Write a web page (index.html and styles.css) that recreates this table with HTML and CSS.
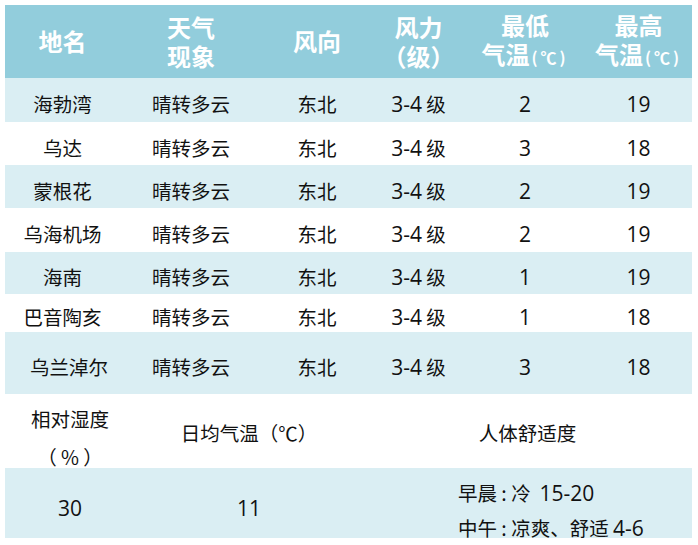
FILE: index.html
```html
<!DOCTYPE html>
<html lang="zh">
<head>
<meta charset="utf-8">
<link rel="stylesheet" href="styles.css">
</head>
<body>
<div class="sheet">
  <div class="row head">
    <div class="hc"><div>地名</div></div>
    <div class="hc"><div>天气<br>现象</div></div>
    <div class="hc"><div>风向</div></div>
    <div class="hc"><div>风力<br>（级）</div></div>
    <div class="hc"><div>最低<br>气温<span class="unit">(℃)</span></div></div>
    <div class="hc"><div>最高<br>气温<span class="unit">(℃)</span></div></div>
  </div>
  <div class="row shade h44"><div class="c">海勃湾</div><div class="c">晴转多云</div><div class="c">东北</div><div class="c"><span class="n">3-4</span>&nbsp;级</div><div class="c"><span class="n">2</span></div><div class="c"><span class="n">19</span></div></div>
  <div class="row h43"><div class="c">乌达</div><div class="c">晴转多云</div><div class="c">东北</div><div class="c"><span class="n">3-4</span>&nbsp;级</div><div class="c"><span class="n">3</span></div><div class="c"><span class="n">18</span></div></div>
  <div class="row shade h43"><div class="c">蒙根花</div><div class="c">晴转多云</div><div class="c">东北</div><div class="c"><span class="n">3-4</span>&nbsp;级</div><div class="c"><span class="n">2</span></div><div class="c"><span class="n">19</span></div></div>
  <div class="row h44"><div class="c">乌海机场</div><div class="c">晴转多云</div><div class="c">东北</div><div class="c"><span class="n">3-4</span>&nbsp;级</div><div class="c"><span class="n">2</span></div><div class="c"><span class="n">19</span></div></div>
  <div class="row shade h42"><div class="c">海南</div><div class="c">晴转多云</div><div class="c">东北</div><div class="c"><span class="n">3-4</span>&nbsp;级</div><div class="c"><span class="n">1</span></div><div class="c"><span class="n">19</span></div></div>
  <div class="row h38"><div class="c">巴音陶亥</div><div class="c">晴转多云</div><div class="c">东北</div><div class="c"><span class="n">3-4</span>&nbsp;级</div><div class="c"><span class="n">1</span></div><div class="c"><span class="n">18</span></div></div>
  <div class="row shade h62"><div class="c shift">乌兰淖尔</div><div class="c">晴转多云</div><div class="c">东北</div><div class="c"><span class="n">3-4</span>&nbsp;级</div><div class="c"><span class="n">3</span></div><div class="c"><span class="n">18</span></div></div>

  <div class="brow h74">
    <div class="bc two"><div>相对湿度<br>（ % ）</div></div>
    <div class="bc label"><div>日均气温（℃）</div></div>
    <div class="bc label"><div>人体舒适度</div></div>
  </div>
  <div class="brow shade h70">
    <div class="bc val"><div><span class="n">30</span></div></div>
    <div class="bc val"><div><span class="n">11</span></div></div>
    <div class="bc comfort">
      <div>早晨 : 冷&nbsp; <span class="n">15-20</span></div>
      <div>中午 : 凉爽、舒适 <span class="n">4-6</span></div>
    </div>
  </div>
</div>
</body>
</html>
```
FILE: styles.css
```css
html, body {
  margin: 0;
  padding: 0;
  background: #ffffff;
}
body {
  font-family: "Noto Sans CJK SC", "Noto Sans", sans-serif;
  color: #111111;
}
.sheet {
  margin: 5px 0 0 5px;
  width: 687px;
}
.row {
  display: grid;
  grid-template-columns: 115px 142px 110px 93px 120px 107px;
  grid-template-rows: 100%;
}
.shade { background: #daeef3; }
.head {
  background: #92cddc;
  height: 73px;
}
.hc {
  display: flex;
  align-items: center;
  justify-content: center;
  text-align: center;
  color: #ffffff;
  font-weight: 700;
  font-size: 24px;
  line-height: 29px;
  padding-bottom: 2px;
  white-space: nowrap;
}
.unit {
  font-size: 16px;
  letter-spacing: 3px;
  margin-left: 2px;
}
.h44 { height: 44px; }
.h43 { height: 43px; }
.h42 { height: 42px; }
.h38 { height: 38px; }
.h62 { height: 62px; }
.h74 { height: 74px; }
.h70 { height: 70px; }
.c {
  display: flex;
  align-items: center;
  justify-content: center;
  font-size: 19.5px;
  line-height: 24px;
  padding-top: 8px;
  box-sizing: border-box;
  white-space: nowrap;
}
.n {
  font-family: "Open Sans", "Noto Sans", sans-serif;
  font-size: 21px;
  line-height: 24px;
}
.shift { padding-left: 13px; }
.brow {
  display: grid;
  grid-template-columns: 130px 228px 329px;
  grid-template-rows: 100%;
}
.bc {
  display: flex;
  flex-direction: column;
  align-items: center;
  justify-content: center;
  font-size: 19.5px;
  line-height: 24px;
  box-sizing: border-box;
  text-align: center;
  white-space: nowrap;
  min-height: 0;
}
.bc.two {
  line-height: 38px;
  padding-top: 14px;
}
.bc.label { padding-top: 4px; }
.bc.val { padding-top: 10px; }
.comfort {
  align-items: flex-start;
  justify-content: flex-start;
  padding-left: 95px;
  line-height: 35px;
  padding-top: 7px;
  text-align: left;
}
```
